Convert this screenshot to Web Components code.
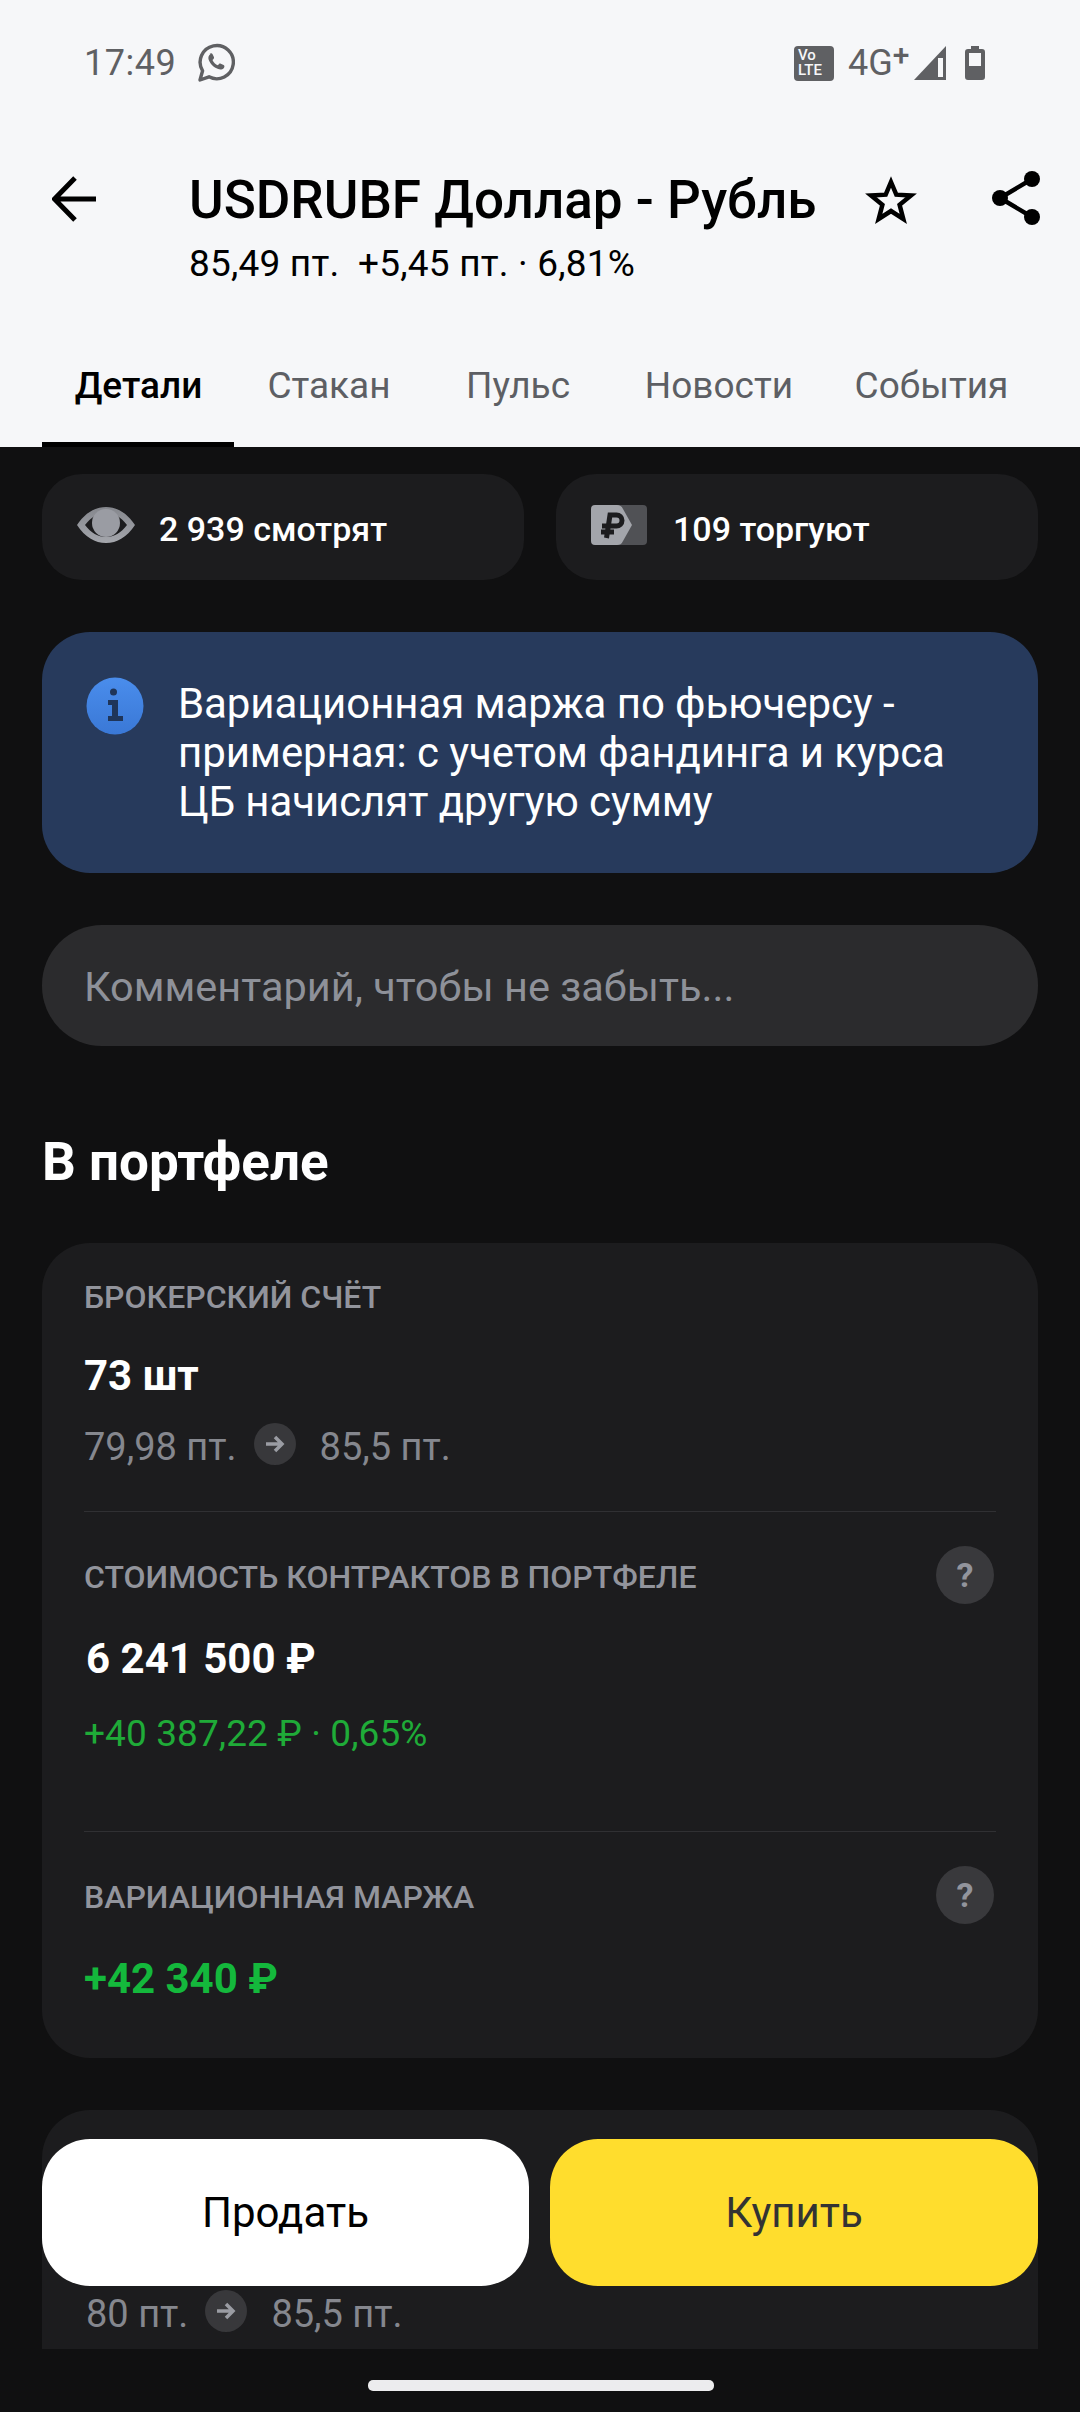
<!DOCTYPE html>
<html lang="ru">
<head>
<meta charset="utf-8">
<title>USDRUBF</title>
<style>
  html, body { margin: 0; padding: 0; background: #101011; }
  body { width: 1080px; height: 2412px; overflow: hidden; position: relative; font-family: Roboto, "Noto Sans", sans-serif; }
  .value { color: #fff; font-size: 42px; font-weight: 700; line-height: 50px; }
  .green { color: #14b83c; }
  .gain { color: #1fab38; font-size: 37px; line-height: 44px; margin-top: 28px; letter-spacing: .1px; }
  card-section[help] .value { margin-top: 3px; }
  card-section[pad=small] price-route { margin-top: 22px; }
  card-section[label^="СТОИМОСТЬ"] .value { margin-left: 2px; }
</style>
</head>
<body>
<status-bar></status-bar>
<app-header></app-header>
<tab-bar></tab-bar>
<main-area>
  <div slot="chips">
    <stat-chip icon="eye">2 939 смотрят</stat-chip>
    <stat-chip icon="tag">109 торгуют</stat-chip>
  </div>
  <info-banner slot="banner">Вариационная маржа по фьючерсу - примерная: с учетом фандинга и курса ЦБ начислят другую сумму</info-banner>
  <comment-field slot="comment" placeholder="Комментарий, чтобы не забыть..."></comment-field>
  <portfolio-card slot="card">
    <card-section label="БРОКЕРСКИЙ СЧЁТ" pad="small">
      <div class="value">73 шт</div>
      <price-route from="79,98 пт." to="85,5 пт."></price-route>
    </card-section>
    <card-section label="СТОИМОСТЬ КОНТРАКТОВ В ПОРТФЕЛЕ" help>
      <div class="value">6 241 500 ₽</div>
      <div class="gain">+40 387,22 ₽ · 0,65%</div>
    </card-section>
    <card-section label="ВАРИАЦИОННАЯ МАРЖА" help last>
      <div class="value green">+42 340 ₽</div>
    </card-section>
  </portfolio-card>
  <next-card slot="next"><price-route from="80 пт." to="85,5 пт."></price-route></next-card>
</main-area>
<action-bar></action-bar>
<home-bar></home-bar>

<script>
const define = (name, html) => {
  customElements.define(name, class extends HTMLElement {
    constructor() {
      super();
      this.attachShadow({ mode: 'open' });
      this.shadowRoot.innerHTML = typeof html === 'function' ? html(this) : html;
    }
  });
};

define('status-bar', `
  <style>
    :host { display: flex; align-items: center; height: 124px; box-sizing: border-box; padding: 2px 0 0 84px; background: #f6f7f9; color: #5f6063; font-size: 36px; }
    .time { letter-spacing: .5px; }
    .wa { margin-left: 21px; }
    .right { margin-left: auto; display: flex; align-items: center; }
    .volte { width: 40px; height: 35px; border-radius: 4px; background: #5f6063; color: #f6f7f9; font-size: 15px; line-height: 15px; font-weight: 500; padding: 2px 0 0 4px; box-sizing: border-box; }
    .net { font-size: 36px; margin-left: 14px; width: 60px; white-space: nowrap; }
    .net sup { font-size: 30px; line-height: 0; vertical-align: 10px; font-weight: 500; }
    .sig { margin-left: 6px; }
    .bat { margin: 0 95px 0 18px; }
  </style>
  <span class="time">17:49</span>
  <svg class="wa" width="38" height="40" viewBox="0 0 38 40" fill="none">
    <path d="M3 37l2.600-9.200A16.600 16.600 0 1 1 12 33.800z" stroke="#5f6063" stroke-width="3.400" stroke-linejoin="round"/>
    <path d="M12.600 11c1-1 2.400-1 3 .2l1.300 2.800c.3.700.1 1.400-.4 1.900l-1 1c1 2.400 3 4.300 5.400 5.300l1.100-1.200c.5-.5 1.200-.6 1.800-.3l2.800 1.400c1 .5 1.100 1.800.3 2.800-1.400 1.700-3.700 2-5.700 1.200-4.600-1.700-8.200-5.300-9.600-9.600-.6-2-.1-4 1.800-5.500z" fill="#5f6063"/>
  </svg>
  <div class="right">
    <div class="volte">Vo<br>LTE</div>
    <span class="net">4G<sup>+</sup></span>
    <svg class="sig" width="33" height="34" viewBox="0 0 33 34">
      <path d="M32 0v34H0z" fill="#5f6063"/>
      <path d="M24 12h5v19h-5z" fill="#f6f7f9"/>
    </svg>
    <svg class="bat" width="20" height="34" viewBox="0 0 20 34">
      <path d="M6 0h8v3h3a3 3 0 0 1 3 3v25a3 3 0 0 1-3 3H3a3 3 0 0 1-3-3V6a3 3 0 0 1 3-3h3z" fill="#5f6063"/>
      <rect x="4" y="7" width="12" height="13" fill="#f6f7f9"/>
    </svg>
  </div>
`);

define('app-header', `
  <style>
    :host { display: flex; height: 190px; box-sizing: border-box; background: #f6f7f9; color: #000; position: relative; }
    .back { margin: 52px 0 0 52px; width: 137px; flex: none; }
    .titles { flex: 1; padding-top: 45px; }
    .title { font-size: 53px; font-weight: 500; line-height: 62px; white-space: nowrap; }
    .sub { font-size: 37px; line-height: 42px; margin-top: 12px; white-space: pre; letter-spacing: .2px; }
    .star { position: absolute; left: 865px; top: 50px; overflow: visible; }
    .share { position: absolute; left: 991px; top: 46px; }
  </style>
  <svg class="back" height="46" viewBox="0 0 137 46" fill="none" stroke="#000" stroke-width="5">
    <path d="M44 23H3M23 2L2.500 23 23 44"/>
  </svg>
  <div class="titles">
    <div class="title">USDRUBF Доллар - Рубль</div>
    <div class="sub">85,49 пт.  +5,45 пт. · 6,81%</div>
  </div>
  <svg class="star" width="52" height="52" viewBox="0 0 52 52" fill="none" stroke="#000" stroke-width="4.500" stroke-miterlimit="10">
    <path d="M26 8l5.300 12.700 14.700.8-11.400 9.300 3.700 14.200L26 37l-12.300 8 3.700-14.200L6 21.500l14.700-.8z"/>
  </svg>
  <svg class="share" width="50" height="56" viewBox="0 0 50 56">
    <path d="M41 9L9 28l32 19" fill="none" stroke="#000" stroke-width="4.500"/>
    <circle cx="41" cy="9" r="8"/><circle cx="9" cy="28" r="8"/><circle cx="41" cy="47" r="8"/>
  </svg>
`);

define('tab-bar', `
  <style>
    :host { display: block; height: 133px; box-sizing: border-box; background: #f6f7f9; position: relative; font-size: 37px; color: #5d5f64; }
    .row { display: grid; grid-template-columns: 193px 188px 190px 212px 1fr; margin-left: 42px; width: 996px; padding-top: 50px; line-height: 44px; text-align: center; }
    .on { color: #000; font-weight: 500; }
    .line { position: absolute; left: 42px; width: 192px; bottom: 0; height: 5px; background: #000; }
  </style>
  <div class="row"><span class="on">Детали</span><span>Стакан</span><span>Пульс</span><span>Новости</span><span>События</span></div>
  <div class="line"></div>
`);

define('main-area', `
  <style>
    :host { display: block; height: 1902px; overflow: hidden; box-sizing: border-box; padding: 27px 42px 0; background: #101011; }
    ::slotted([slot=chips]) { display: grid; grid-template-columns: 482px 482px; column-gap: 32px; }
    h2 { margin: 87px 0 0; font-size: 53px; line-height: 58px; font-weight: 700; color: #fff; }
    .gap { height: 52px; }
  </style>
  <slot name="chips"></slot>
  <div class="gap"></div>
  <slot name="banner"></slot>
  <div class="gap"></div>
  <slot name="comment"></slot>
  <h2>В портфеле</h2>
  <slot name="card"></slot>
  <slot name="next"></slot>
`);

define('stat-chip', host => {
  const eye = `<svg width="58" height="36" viewBox="0 0 58 36">
      <defs><linearGradient id="g" x1="0" y1="0" x2="0" y2="1"><stop offset="0" stop-color="#85878d"/><stop offset="1" stop-color="#a4a6ac"/></linearGradient></defs>
      <path d="M0 18C8 6 18 0 29 0s21 6 29 18C50 30 40 36 29 36S8 30 0 18zM8 18c6 8 13 12 21 12s15-4 21-12c-6-8-13-12-21-12S14 10 8 18z" fill="url(#g)"/>
      <circle cx="29" cy="16" r="14" fill="#9a9ca3"/>
    </svg>`;
  const tag = `<svg width="56" height="40" viewBox="0 0 56 40">
      <path d="M4 0h48a4 4 0 0 1 4 4v32a4 4 0 0 1-4 4H4z" fill="#505155"/>
      <path d="M4 0h22c3 0 4.500 1 6 4l9 16-9 16c-1.500 3-3 4-6 4H4a4 4 0 0 1-4-4V4a4 4 0 0 1 4-4z" fill="#a3a5ab"/>
      <path d="M15.500 33l3.500-23h6.500a5.500 5.500 0 0 1 0 11H11M10 27h13" fill="none" stroke="#1c1c1e" stroke-width="5"/>
    </svg>`;
  return `
  <style>
    :host { display: flex; align-items: center; height: 106px; box-sizing: border-box; padding: 4px 0 0 35px; border-radius: 40px; background: #1c1c1e; color: #fff; font-size: 34px; font-weight: 500; }
    .ic { width: 58px; display: flex; margin-right: 24px; position: relative; top: -4px; }
  </style>
  <span class="ic">${host.getAttribute('icon') === 'eye' ? eye : tag}</span><slot></slot>`;
});

define('info-banner', `
  <style>
    :host { display: flex; height: 241px; box-sizing: border-box; padding: 47px 40px 0 44px; border-radius: 48px; background: #273a5c; color: #fff; font-size: 42px; line-height: 49px; letter-spacing: -.08px; }
    svg { flex: none; margin: -2px 34px 0 0; }
  </style>
  <svg width="58" height="58" viewBox="0 0 58 58">
    <defs><linearGradient id="b" x1="0" y1="0" x2="0" y2="1"><stop offset="0" stop-color="#4a8dec"/><stop offset="1" stop-color="#3a78d6"/></linearGradient></defs>
    <circle cx="29" cy="29" r="28.500" fill="url(#b)"/>
    <circle cx="27.500" cy="15" r="3.500" fill="#1f3559"/>
    <path d="M22 23h10v16h5v5H22v-5h4V28h-4z" fill="#1f3559"/>
  </svg>
  <div><slot></slot></div>
`);

define('comment-field', host => `
  <style>
    :host { display: flex; align-items: center; height: 121px; box-sizing: border-box; padding: 2px 0 0 42px; border-radius: 60px; background: #2b2b2d; color: #8e9199; font-size: 41.500px; }
  </style>
  ${host.getAttribute('placeholder')}
`);

define('portfolio-card', `
  <style>
    :host { display: block; height: 815px; margin-top: 52px; box-sizing: border-box; padding: 0 42px; border-radius: 48px; background: #1c1c1e; }
  </style>
  <slot></slot>
`);

define('card-section', host => `
  <style>
    :host { display: block; box-sizing: border-box; color: #fff; }
    :host([pad=small]) { height: 269px; border-bottom: 1px solid #303033; }
    :host([help]) { height: 320px; border-bottom: 1px solid #303033; padding-top: 11px; }
    :host([last]) { height: 226px; border: 0; }
    .head { display: flex; align-items: center; justify-content: space-between; height: 108px; font-size: 32px; font-weight: 500; color: #92949c; padding-right: 2px; }
    .q { width: 58px; height: 58px; border-radius: 50%; background: #39393c; color: #92949c; font-weight: 700; font-size: 34px; display: flex; align-items: center; justify-content: center; position: relative; top: -2px; }
  </style>
  <div class="head"><span>${host.getAttribute('label')}</span>${host.hasAttribute('help') ? '<span class="q">?</span>' : ''}</div>
  <slot></slot>
`);

define('price-route', host => `
  <style>
    :host { display: flex; align-items: center; height: 48px; font-size: 38px; color: #85878e; }
    .a { width: 42px; height: 42px; border-radius: 50%; background: #38383b; margin: 0 24px 0 17px; display: flex; align-items: center; justify-content: center; position: relative; top: -3px; }
  </style>
  <span>${host.getAttribute('from')}</span>
  <span class="a"><svg width="20" height="18" viewBox="0 0 20 18" fill="none" stroke="#9a9ca3" stroke-width="3.500"><path d="M1 9h16M10 2l7 7-7 7"/></svg></span>
  <span>${host.getAttribute('to')}</span>
`);

define('next-card', `
  <style>
    :host { display: block; height: 300px; margin-top: 52px; box-sizing: border-box; padding: 180px 0 0 44px; border-radius: 48px 48px 0 0; background: #1c1c1e; }
  </style>
  <slot></slot>
`);

define('action-bar', `
  <style>
    :host { position: absolute; left: 42px; top: 2139px; width: 996px; height: 147px; display: grid; grid-template-columns: 487px 488px; column-gap: 21px; font-size: 42px; }
    div { display: flex; align-items: center; justify-content: center; border-radius: 48px; }
    .sell { background: #fff; color: #000; }
    .buy { background: #ffdd2d; color: #333; }
  </style>
  <div class="sell">Продать</div>
  <div class="buy">Купить</div>
`);

define('home-bar', `
  <style>
    :host { display: block; position: absolute; left: 368px; top: 2380px; width: 346px; height: 11px; border-radius: 5px; background: #ececee; }
  </style>
`);
</script>
</body>
</html>
